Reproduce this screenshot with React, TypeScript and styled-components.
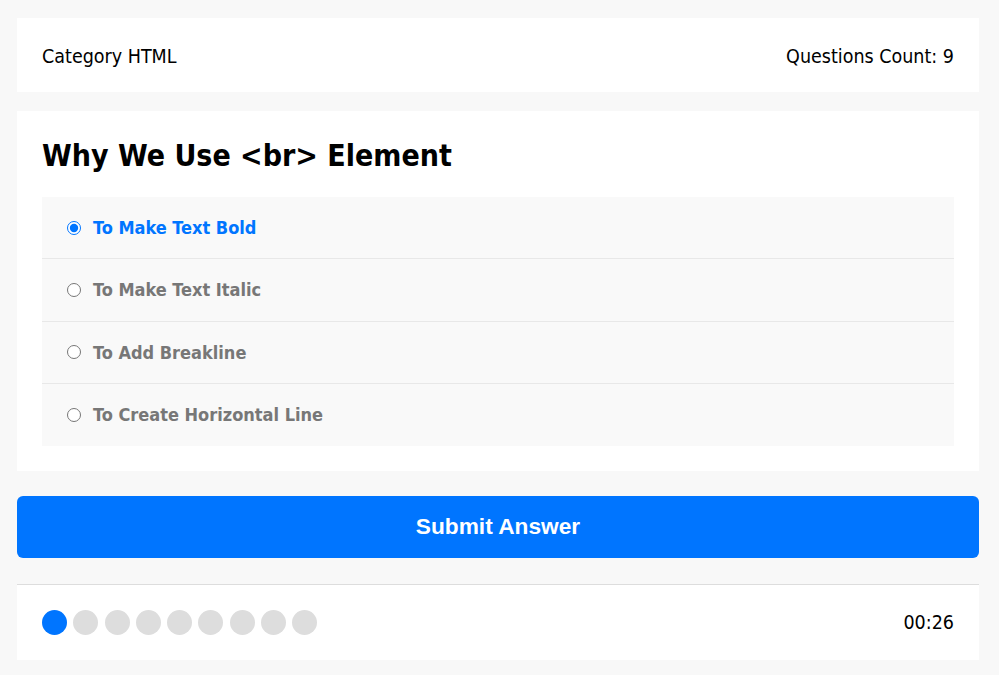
import React, { useState } from "react";
import styled, { createGlobalStyle } from "styled-components";

const Global = createGlobalStyle`
  html, body { margin: 0; padding: 0; background: #f8f8f8; }
  body { font-family: Tahoma, "DejaVu Sans Condensed", "DejaVu Sans", sans-serif; }
  * { box-sizing: border-box; }
`;

const Page = styled.div`
  width: 962px;
  margin: 18px 0 0 17px;
  display: flex;
  flex-direction: column;
`;

const InfoBar = styled.div`
  background: #fff;
  padding: 27px 25px 23px;
  display: flex;
  justify-content: space-between;
  align-items: center;
  font-size: 19.5px;
  line-height: 24px;
  color: #000;
  margin-bottom: 19px;
`;

const QuizArea = styled.div`
  background: #fff;
  padding: 27px 25px 25px;
  margin-bottom: 25px;
`;

const Title = styled.h2`
  margin: 0 0 23px;
  font-size: 30px;
  line-height: 36px;
  font-weight: bold;
  color: #000;
`;

const Options = styled.div`
  background: #f9f9f9;
  display: flex;
  flex-direction: column;
`;

const Option = styled.label<{ $last?: boolean; $checked?: boolean }>`
  display: flex;
  align-items: center;
  padding: 0 25px;
  height: 62.25px;
  border-bottom: ${(p) => (p.$last ? "none" : "1px solid #e8e8e8")};
  font-size: 18px;
  font-weight: bold;
  color: ${(p) => (p.$checked ? "#0075ff" : "#777")};
  cursor: pointer;
`;

const Radio = styled.input`
  margin: 0 12px 0 0;
  width: 14px;
  height: 14px;
  accent-color: #0075ff;
`;

const SubmitButton = styled.button`
  height: 62px;
  width: 100%;
  border: none;
  border-radius: 6px;
  background: #0075ff;
  color: #fff;
  font-family: "Liberation Sans", Arial, sans-serif;
  font-weight: bold;
  font-size: 22.7px;
  padding: 0 0 2px;
  cursor: pointer;
  margin-bottom: 26px;
`;

const Footer = styled.div`
  background: #fff;
  border-top: 1px solid #ddd;
  padding: 25px;
  display: flex;
  justify-content: space-between;
  align-items: center;
`;

const Bullets = styled.div`
  display: flex;
  gap: 6.3px;
`;

const Bullet = styled.span<{ $on?: boolean }>`
  width: 25px;
  height: 25px;
  border-radius: 50%;
  background: ${(p) => (p.$on ? "#0075ff" : "#ddd")};
`;

const Timer = styled.div`
  font-size: 19.5px;
  color: #000;
`;

const options = [
  "To Make Text Bold",
  "To Make Text Italic",
  "To Add Breakline",
  "To Create Horizontal Line",
];

export default function App() {
  const [sel, setSel] = useState(0);
  return (
    <>
      <Global />
      <Page>
        <InfoBar>
          <span>Category HTML</span>
          <span>Questions Count: 9</span>
        </InfoBar>
        <QuizArea>
          <Title>Why We Use &lt;br&gt; Element</Title>
          <Options>
            {options.map((o, i) => (
              <Option key={o} $last={i === options.length - 1} $checked={sel === i}>
                <Radio type="radio" name="q" checked={sel === i} onChange={() => setSel(i)} />
                {o}
              </Option>
            ))}
          </Options>
        </QuizArea>
        <SubmitButton>Submit Answer</SubmitButton>
        <Footer>
          <Bullets>
            {Array.from({ length: 9 }).map((_, i) => (
              <Bullet key={i} $on={i === 0} />
            ))}
          </Bullets>
          <Timer>00:26</Timer>
        </Footer>
      </Page>
    </>
  );
}
